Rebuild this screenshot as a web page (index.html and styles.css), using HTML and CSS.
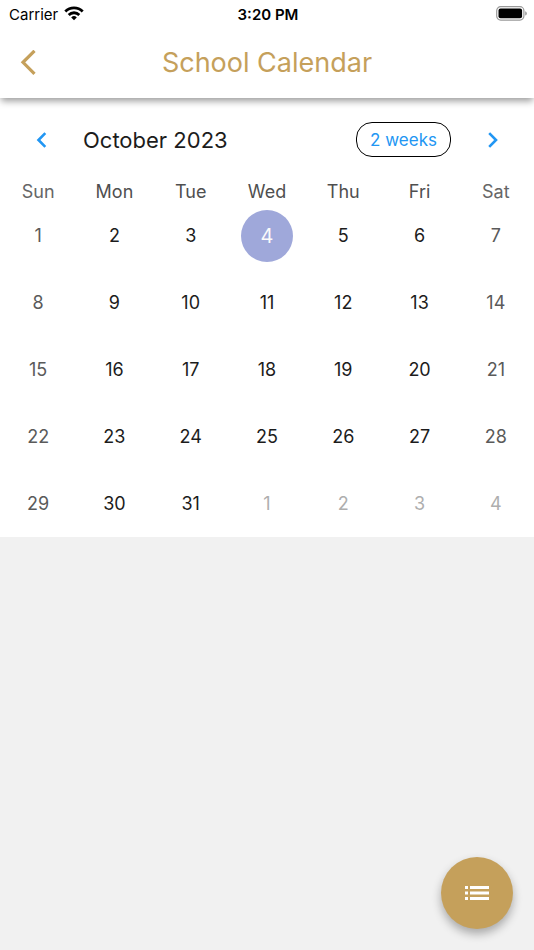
FILE: index.html
```html
<!DOCTYPE html>
<html lang="en">
<head>
<meta charset="utf-8">
<meta name="viewport" content="width=device-width, initial-scale=1">
<title>School Calendar</title>
<link rel="stylesheet" href="styles.css">
</head>
<body>
<header class="top">
  <div class="status">
    <div class="carrier">
      <span>Carrier</span>
      <svg width="20" height="16" viewBox="0 0 20 16" aria-hidden="true">
        <path d="M10 14.2 7.2 11.4a4 4 0 0 1 5.600 0Z" fill="#000"/>
        <path d="M4.700 8.900a7.600 7.600 0 0 1 10.600 0M1.300 5.500a12.400 12.400 0 0 1 17.400 0" fill="none" stroke="#000" stroke-width="2.800"/>
      </svg>
    </div>
    <span class="time">3:20 PM</span>
    <svg class="battery" width="31" height="16" viewBox="0 0 31 16" aria-hidden="true">
      <rect x=".7" y=".7" width="27.2" height="13.4" rx="4" fill="none" stroke="#999" stroke-width="1.2"/>
      <rect x="2.5" y="2.5" width="23.6" height="9.8" rx="2" fill="#000"/>
      <path d="M29.2 5.2q1.6.5 1.6 2.2t-1.6 2.2Z" fill="#999"/>
    </svg>
  </div>
  <div class="bar">
    <button class="icon-button back" aria-label="Back">
      <svg width="16" height="26" viewBox="0 0 16 26" aria-hidden="true"><path d="M14.500 .8 3 12.300l11.500 11.500" fill="none" stroke="#c5a05b" stroke-width="3.200"/></svg>
    </button>
    <h1>School Calendar</h1>
  </div>
</header>
<main class="calendar">
  <div class="month">
    <button class="icon-button arrow" aria-label="Previous month">
      <svg width="12" height="16" viewBox="0 0 12 16" aria-hidden="true"><path d="M9.300 1.200 2.500 8l6.800 6.800" fill="none" stroke="#2196f3" stroke-width="2.600"/></svg>
    </button>
    <h2>October 2023</h2>
    <button class="format">2 weeks</button>
    <button class="icon-button arrow" aria-label="Next month">
      <svg width="12" height="16" viewBox="0 0 12 16" aria-hidden="true"><path d="M2.200 1.200 9 8l-6.800 6.800" fill="none" stroke="#2196f3" stroke-width="2.600"/></svg>
    </button>
  </div>
  <table>
    <thead>
      <tr><th>Sun</th><th>Mon</th><th>Tue</th><th>Wed</th><th>Thu</th><th>Fri</th><th>Sat</th></tr>
    </thead>
    <tbody>
      <tr><td class="weekend"><button>1</button></td><td><button>2</button></td><td><button>3</button></td><td class="today"><button>4</button></td><td><button>5</button></td><td><button>6</button></td><td class="weekend"><button>7</button></td></tr>
      <tr><td class="weekend"><button>8</button></td><td><button>9</button></td><td><button>10</button></td><td><button>11</button></td><td><button>12</button></td><td><button>13</button></td><td class="weekend"><button>14</button></td></tr>
      <tr><td class="weekend"><button>15</button></td><td><button>16</button></td><td><button>17</button></td><td><button>18</button></td><td><button>19</button></td><td><button>20</button></td><td class="weekend"><button>21</button></td></tr>
      <tr><td class="weekend"><button>22</button></td><td><button>23</button></td><td><button>24</button></td><td><button>25</button></td><td><button>26</button></td><td><button>27</button></td><td class="weekend"><button>28</button></td></tr>
      <tr><td class="weekend"><button>29</button></td><td><button>30</button></td><td><button>31</button></td><td class="outside"><button>1</button></td><td class="outside"><button>2</button></td><td class="outside"><button>3</button></td><td class="outside"><button>4</button></td></tr>
    </tbody>
  </table>
</main>
<button class="fab" aria-label="Event list">
  <svg width="24" height="14" viewBox="0 0 24 14" fill="#fff" aria-hidden="true">
    <path d="M0 0h3v3H0zM5 0h19v3H5zM0 5.500h3v3H0zM5 5.500h19v3H5zM0 11h3v3H0zM5 11h19v3H5z"/>
  </svg>
</button>
</body>
</html>
```
FILE: styles.css
```css
* {
  box-sizing: border-box;
}

body {
  margin: 0;
  min-height: 100vh;
  background: #f1f1f1;
  color: #1c1c1c;
  font-family: Inter, "Liberation Sans", sans-serif;
}

button {
  padding: 0;
  border: 0;
  background: none;
  color: inherit;
  font: inherit;
  cursor: pointer;
}

h1,
h2 {
  margin: 0;
  font-weight: 400;
}

.top {
  position: relative;
  background: #fff;
  box-shadow: 0 4px 7px -1px rgba(0, 0, 0, 0.4);
}

.status {
  display: grid;
  grid-template-columns: 1fr auto 1fr;
  align-items: center;
  height: 28px;
  padding: 0 7px 0 9px;
  color: #000;
  font-size: 15px;
}

.carrier {
  display: flex;
  align-items: center;
  gap: 6px;
}

.time {
  font-weight: 600;
}

.battery {
  justify-self: end;
}

.bar {
  display: grid;
  grid-template-columns: 56px 1fr 56px;
  align-items: center;
  height: 70px;
}

.icon-button {
  display: grid;
  place-items: center;
}

.back {
  height: 56px;
}

.bar h1 {
  color: #c5a05b;
  font-size: 27px;
  line-height: 40px;
  text-align: center;
}

.calendar {
  background: #fff;
}

.month {
  display: flex;
  align-items: center;
  height: 83px;
}

.arrow {
  width: 83px;
  height: 48px;
}

.month h2 {
  flex: 1;
  font-size: 22px;
}

.format {
  height: 35px;
  padding: 0 13px;
  border: 1px solid #000;
  border-radius: 16px;
  color: #2196f3;
  font-size: 17px;
}

table {
  width: 100%;
  table-layout: fixed;
  border-collapse: collapse;
  font-size: 18px;
}

th {
  height: 21px;
  padding: 0;
  color: #4f4f4f;
  font-weight: 400;
  line-height: 20px;
}

th:first-child,
th:last-child {
  color: #666;
}

td {
  height: 67px;
  padding: 0;
  text-align: center;
}

td button {
  width: 52px;
  height: 52px;
  border-radius: 50%;
  vertical-align: middle;
}

.weekend {
  color: #5a5a5a;
}

.outside {
  color: #aeaeae;
}

.today button {
  background: #9fa8da;
  color: #fafafa;
  font-size: 20px;
}

.fab {
  position: fixed;
  right: 21px;
  bottom: 21px;
  display: grid;
  place-items: center;
  width: 72px;
  height: 72px;
  border-radius: 50%;
  background: #c5a05b;
  box-shadow: 0 5px 10px rgba(0, 0, 0, 0.3);
}
```
